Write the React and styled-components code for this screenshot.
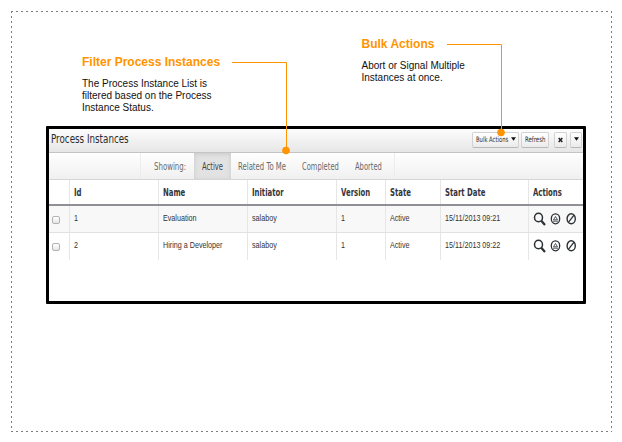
import React from "react";
import styled, { createGlobalStyle } from "styled-components";

const Global = createGlobalStyle`
  * { box-sizing: border-box; }
  body { margin: 0; background: #fff; font-family: "Liberation Sans", Arial, sans-serif; }
`;

const Page = styled.main`
  position: relative;
  width: 622px;
  height: 442px;
  padding: 11px 10px 10px 11px;
  overflow: hidden;
`;
const dash = "#7c7c7c 0 2px, transparent 2px 5px";
const Frame = styled.section`
  width: 601px;
  height: 421px;
  padding: 26px 0 0 35px;
  background:
    repeating-linear-gradient(90deg, ${dash}) 0 0 / 100% 1px no-repeat,
    repeating-linear-gradient(90deg, ${dash}) 0 100% / 100% 1px no-repeat,
    repeating-linear-gradient(180deg, ${dash}) 0 0 / 1px 100% no-repeat,
    repeating-linear-gradient(180deg, ${dash}) 100% 0 / 1px 100% no-repeat;
`;
const Callouts = styled.div`
  display: flex;
  height: 89px;
  padding-left: 36px;
`;
const Callout = styled.article`
  width: ${(p) => p.$width}px;
  padding-top: ${(p) => p.$top}px;
`;
const CalloutTitle = styled.h2`
  margin: 0 0 9px;
  font-size: 12px;
  line-height: 14px;
  color: #ff9400;
  white-space: nowrap;
`;
const CalloutText = styled.p`
  margin: 0;
  font-size: 10px;
  line-height: 12px;
  color: #111;
  white-space: pre;
`;
const Connectors = styled.svg`
  position: absolute;
  inset: 0;
  pointer-events: none;
`;
const Text = styled.span`
  display: inline-block;
  white-space: nowrap;
  transform: scaleX(${(p) => p.$scale ?? 1});
  transform-origin: 0 50%;
`;

const Panel = styled.section`
  width: 540px;
  height: 178px;
  border: 3px solid #000;
  border-radius: 1px;
  overflow: hidden;
`;
const TitleBar = styled.header`
  display: flex;
  align-items: flex-start;
  justify-content: space-between;
  height: 24px;
  padding: 3px 1px 0 2px;
  border-bottom: 1px solid #c4c4c4;
  background: linear-gradient(#fdfdfd, #e6e6e6);
`;
const PanelTitle = styled.h1`
  margin: 0;
  width: 90px;
  font: 400 11.5px/14px "DejaVu Sans", sans-serif;
  color: #2c2c2c;
`;
const Tools = styled.div`
  display: flex;
`;
const Button = styled.button`
  display: flex;
  align-items: center;
  width: ${(p) => p.$width}px;
  height: 16px;
  margin: 0 0 0 ${(p) => p.$gap ?? 0}px;
  padding: 0 0 1px ${(p) => p.$pad ?? 3}px;
  border: 1px solid #d2d2d2;
  border-bottom-color: #b8b8b8;
  border-radius: 2px;
  background: linear-gradient(#fff, #ebebeb);
  font: 400 7.5px/12px "DejaVu Sans", sans-serif;
  color: #2c2c2c;
`;
const ButtonLabel = styled.span`
  width: ${(p) => p.$width}px;
  white-space: nowrap;
`;
const FilterBar = styled.nav`
  display: flex;
  height: 27px;
  border-bottom: 1px solid #d5d5d5;
  background: linear-gradient(#fff, #f0f0f0);
  font: 400 10px/27px "DejaVu Sans", sans-serif;
  color: #6a6a6a;
`;
const FilterItem = styled.div`
  width: ${(p) => p.$width}px;
  padding-left: ${(p) => p.$pad}px;
  overflow: hidden;
  color: ${(p) => (p.$active ? "#444" : "inherit")};
  background: ${(p) => (p.$active ? "#e2e2e2" : "none")};
  box-shadow: ${(p) => (p.$active ? "inset 0 1px 4px #c8c8c8" : "none")};
  border-right: ${(p) => (p.$divider ? "1px solid #ececec" : "0")};
`;
const Row = styled.div`
  display: grid;
  grid-template-columns: 20px 89px 89px 89px 49px 55px 88px 1fr;
  height: ${(p) => p.$height}px;
  background: ${(p) => (p.$odd ? "#f8f8f8" : "#fff")};
  border-bottom: ${(p) => (p.$head ? "2px solid #928e95" : p.$odd ? "1px solid #e1e1e1" : "0")};
`;
const Cell = styled.div`
  padding-left: 4px;
  border-left: ${(p) => (p.$first ? "0" : "1px solid #e6e6e6")};
  font: 400 9.5px/24px "Liberation Sans", Arial, sans-serif;
  color: #333;
  overflow: hidden;
`;
const HeadCell = styled(Cell)`
  font: 700 10px/26px "DejaVu Sans", sans-serif;
  color: #34343c;
`;
const Check = styled.span`
  display: block;
  width: 8px;
  height: 8px;
  margin: 10px 0 0 -1px;
  border: 1px solid #b2b2b2;
  border-radius: 2px;
  background: linear-gradient(#fff, #e6e6e6);
`;
const Actions = styled(Cell)`
  padding: 6px 0 0 4px;
`;

const ActionIcons = () => (
  <svg width="46" height="15" viewBox="0 0 46 15" fill="none" stroke="#2b3134">
    <ellipse cx="5.5" cy="5.5" rx="4" ry="4.3" strokeWidth="1.5" />
    <path d="M8.3 8.8L12 13" strokeWidth="2.2" />
    <ellipse cx="22.5" cy="6.8" rx="4.2" ry="5" strokeWidth="1.3" />
    <path d="M22.5 4.5L20.5 7.8H24.5ZM20 9.2H25" strokeWidth=".8" />
    <ellipse cx="38.2" cy="6.8" rx="4.1" ry="5" strokeWidth="1.4" />
    <path d="M41 3.2L35.4 10.4" strokeWidth="1.3" />
  </svg>
);
const ArrowMark = styled.svg`
  display: block;
  margin-bottom: 2px;
`;
const Arrow = () => (
  <ArrowMark width="5" height="4" viewBox="0 0 5 4">
    <path d="M0 .2H5L2.5 3.8Z" fill="#111" />
  </ArrowMark>
);

const columns = ["Id", "Name", "Initiator", "Version", "State", "Start Date", "Actions"];
const rows = [
  ["1", "Evaluation", "salaboy", "1", "Active", "15/11/2013 09:21"],
  ["2", "Hiring a Developer", "salaboy", "1", "Active", "15/11/2013 09:22"],
];

export default function App() {
  return (
    <Page>
      <Global />
      <Frame>
        <Callouts>
          <Callout $width={279.5} $top={18}>
            <CalloutTitle>Filter Process Instances</CalloutTitle>
            <CalloutText>{"The Process Instance List is\nfiltered based on the Process\nInstance Status."}</CalloutText>
          </Callout>
          <Callout $width={200} $top={0}>
            <CalloutTitle>Bulk Actions</CalloutTitle>
            <CalloutText>{"Abort or Signal Multiple\nInstances at once."}</CalloutText>
          </Callout>
        </Callouts>
        <Panel>
          <TitleBar>
            <PanelTitle><Text $scale={0.76}>Process Instances</Text></PanelTitle>
            <Tools>
              <Button $width={47}>
                <ButtonLabel $width={35}><Text $scale={0.7}>Bulk Actions</Text></ButtonLabel>
                <Arrow />
              </Button>
              <Button $width={28} $gap={2}><Text $scale={0.72}>Refresh</Text></Button>
              <Button $width={13} $gap={5}>
                <svg width="5" height="6" viewBox="0 0 5 6"><path d="M.7 1L4.3 5M4.3 1L.7 5" stroke="#222" strokeWidth="1.6" /></svg>
              </Button>
              <Button $width={12} $gap={3} $pad={3}><Arrow /></Button>
            </Tools>
          </TitleBar>
          <FilterBar>
            <FilterItem $width={92} $divider />
            <FilterItem $width={53} $pad={13}><Text $scale={0.7}>Showing:</Text></FilterItem>
            <FilterItem $width={37} $pad={8} $active><Text $scale={0.68}>Active</Text></FilterItem>
            <FilterItem $width={64} $pad={7}><Text $scale={0.69}>Related To Me</Text></FilterItem>
            <FilterItem $width={52} $pad={7}><Text $scale={0.675}>Completed</Text></FilterItem>
            <FilterItem $width={48} $pad={8} $divider><Text $scale={0.675}>Aborted</Text></FilterItem>
          </FilterBar>
          <Row $head $height={26}>
            <HeadCell $first />
            {columns.map((label) => (
              <HeadCell key={label}><Text $scale={0.69}>{label}</Text></HeadCell>
            ))}
          </Row>
          {rows.map((row, index) => (
            <Row key={index} $odd={index === 0} $height={27}>
              <Cell $first><Check /></Cell>
              {row.map((label, i) => (
                <Cell key={i}><Text $scale={0.755}>{label}</Text></Cell>
              ))}
              <Actions><ActionIcons /></Actions>
            </Row>
          ))}
        </Panel>
      </Frame>
      <Connectors width="622" height="442" fill="none" stroke="#ff9400">
        <path d="M232 62.5H286.5V150M447 44.5H501.5V132" />
        <circle cx="286" cy="150.5" r="3.4" fill="#ff9400" />
        <circle cx="501" cy="132.5" r="3.4" fill="#ff9400" />
      </Connectors>
    </Page>
  );
}
